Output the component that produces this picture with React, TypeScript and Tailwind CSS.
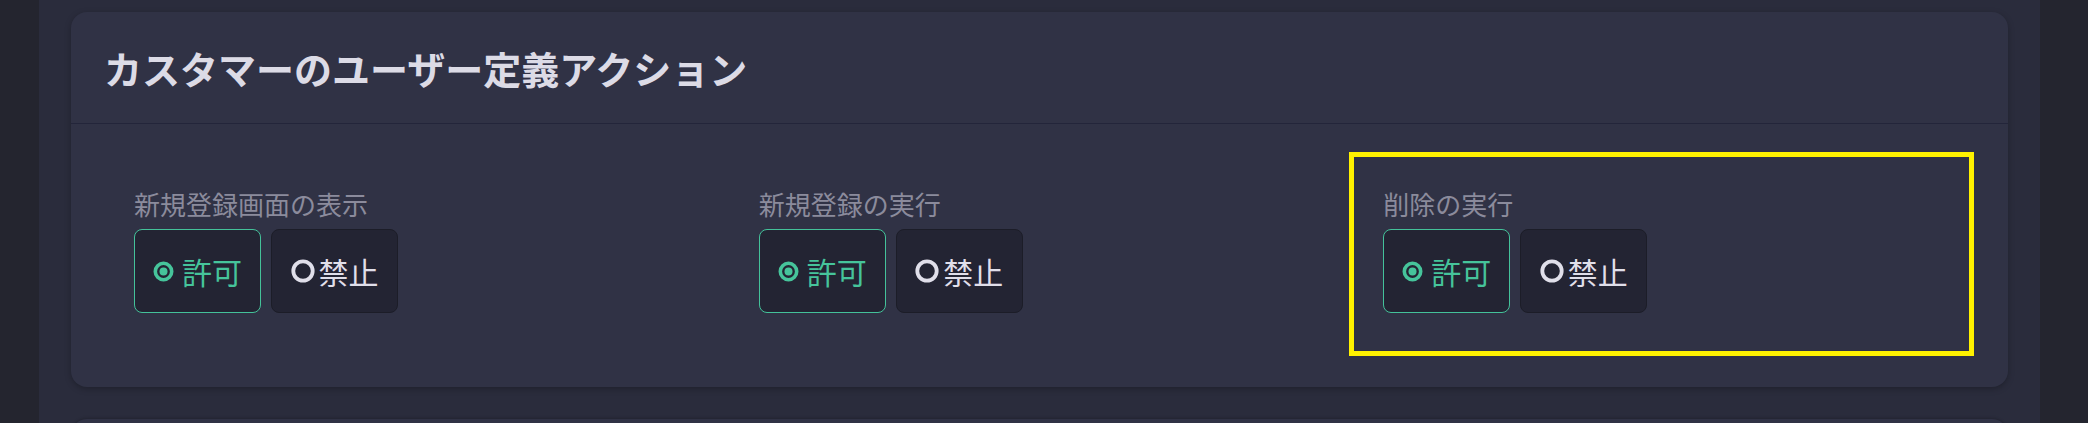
import React from "react";

type Action = {
  label: string;
  allowed: boolean;
  highlight?: boolean;
};

const actions: Action[] = [
  { label: "新規登録画面の表示", allowed: true },
  { label: "新規登録の実行", allowed: true },
  { label: "削除の実行", allowed: true, highlight: true },
];

const CheckedIcon = () => (
  <svg width="21" height="21" viewBox="0 0 21 21" className="shrink-0">
    <circle cx="10.5" cy="10.5" r="8.2" fill="none" stroke="currentColor" strokeWidth="3.6" />
    <circle cx="10.5" cy="10.5" r="4" fill="currentColor" />
  </svg>
);

const UncheckedIcon = () => (
  <svg width="24" height="24" viewBox="0 0 24 24" className="shrink-0">
    <circle cx="12" cy="12" r="9.7" fill="none" stroke="currentColor" strokeWidth="3.8" />
  </svg>
);

const ChoiceButton = ({ text, checked }: { text: string; checked: boolean }) => (
  <button
    className={`flex h-[84px] w-[127px] items-center justify-center rounded-[8px] bg-[#232433] text-[30px] leading-none ${
      checked
        ? "gap-[8px] border-[1.5px] border-[#44c29a] text-[#46c49b]"
        : "gap-[4px] border border-[#1c1d28] text-[#e0dfea]"
    }`}
  >
    {checked ? <CheckedIcon /> : <UncheckedIcon />}
    <span>{text}</span>
  </button>
);

const ActionSetting = ({ action }: { action: Action }) => (
  <div
    className={`flex flex-col gap-[7px] border-[5px] px-[29px] pt-[29px] pb-[38px] ${
      action.highlight ? "border-[#fff200]" : "border-transparent"
    }`}
  >
    <div className="text-[26px] leading-[36px] text-[#8b8b9c]">{action.label}</div>
    <div className="flex gap-[10px]">
      <ChoiceButton text="許可" checked={action.allowed} />
      <ChoiceButton text="禁止" checked={!action.allowed} />
    </div>
  </div>
);

export default function App() {
  return (
    <div
      className="flex h-[423px] w-full overflow-hidden bg-[#2a2c3c]"
      style={{ fontFamily: '"Noto Sans CJK JP", "Noto Sans", sans-serif' }}
    >
      <aside className="w-[39px] shrink-0 bg-[#24252f]" />

      <main className="flex-1 px-[32px] pt-[12px]">
        {/* Customer custom actions */}
        <section className="rounded-[16px] bg-[#303245] shadow-[0_2px_6px_rgba(0,0,0,0.25)]">
          <header className="flex h-[112px] items-center border-b border-[#23253a] pl-[33px]">
            <h2 className="text-[38px] font-bold leading-none text-[#dcdbe6]">
              カスタマーのユーザー定義アクション
            </h2>
          </header>
          <div className="grid grid-cols-3 pt-[28px] pr-[34px] pb-[31px] pl-[29px]">
            {actions.map((action) => (
              <ActionSetting key={action.label} action={action} />
            ))}
          </div>
        </section>

        <section className="mt-[32px] h-[80px] rounded-[16px] bg-[#303245] shadow-[0_-1px_3px_rgba(0,0,0,0.2)]" />
      </main>

      <aside className="w-[48px] shrink-0 bg-[#24252f]" />
    </div>
  );
}
